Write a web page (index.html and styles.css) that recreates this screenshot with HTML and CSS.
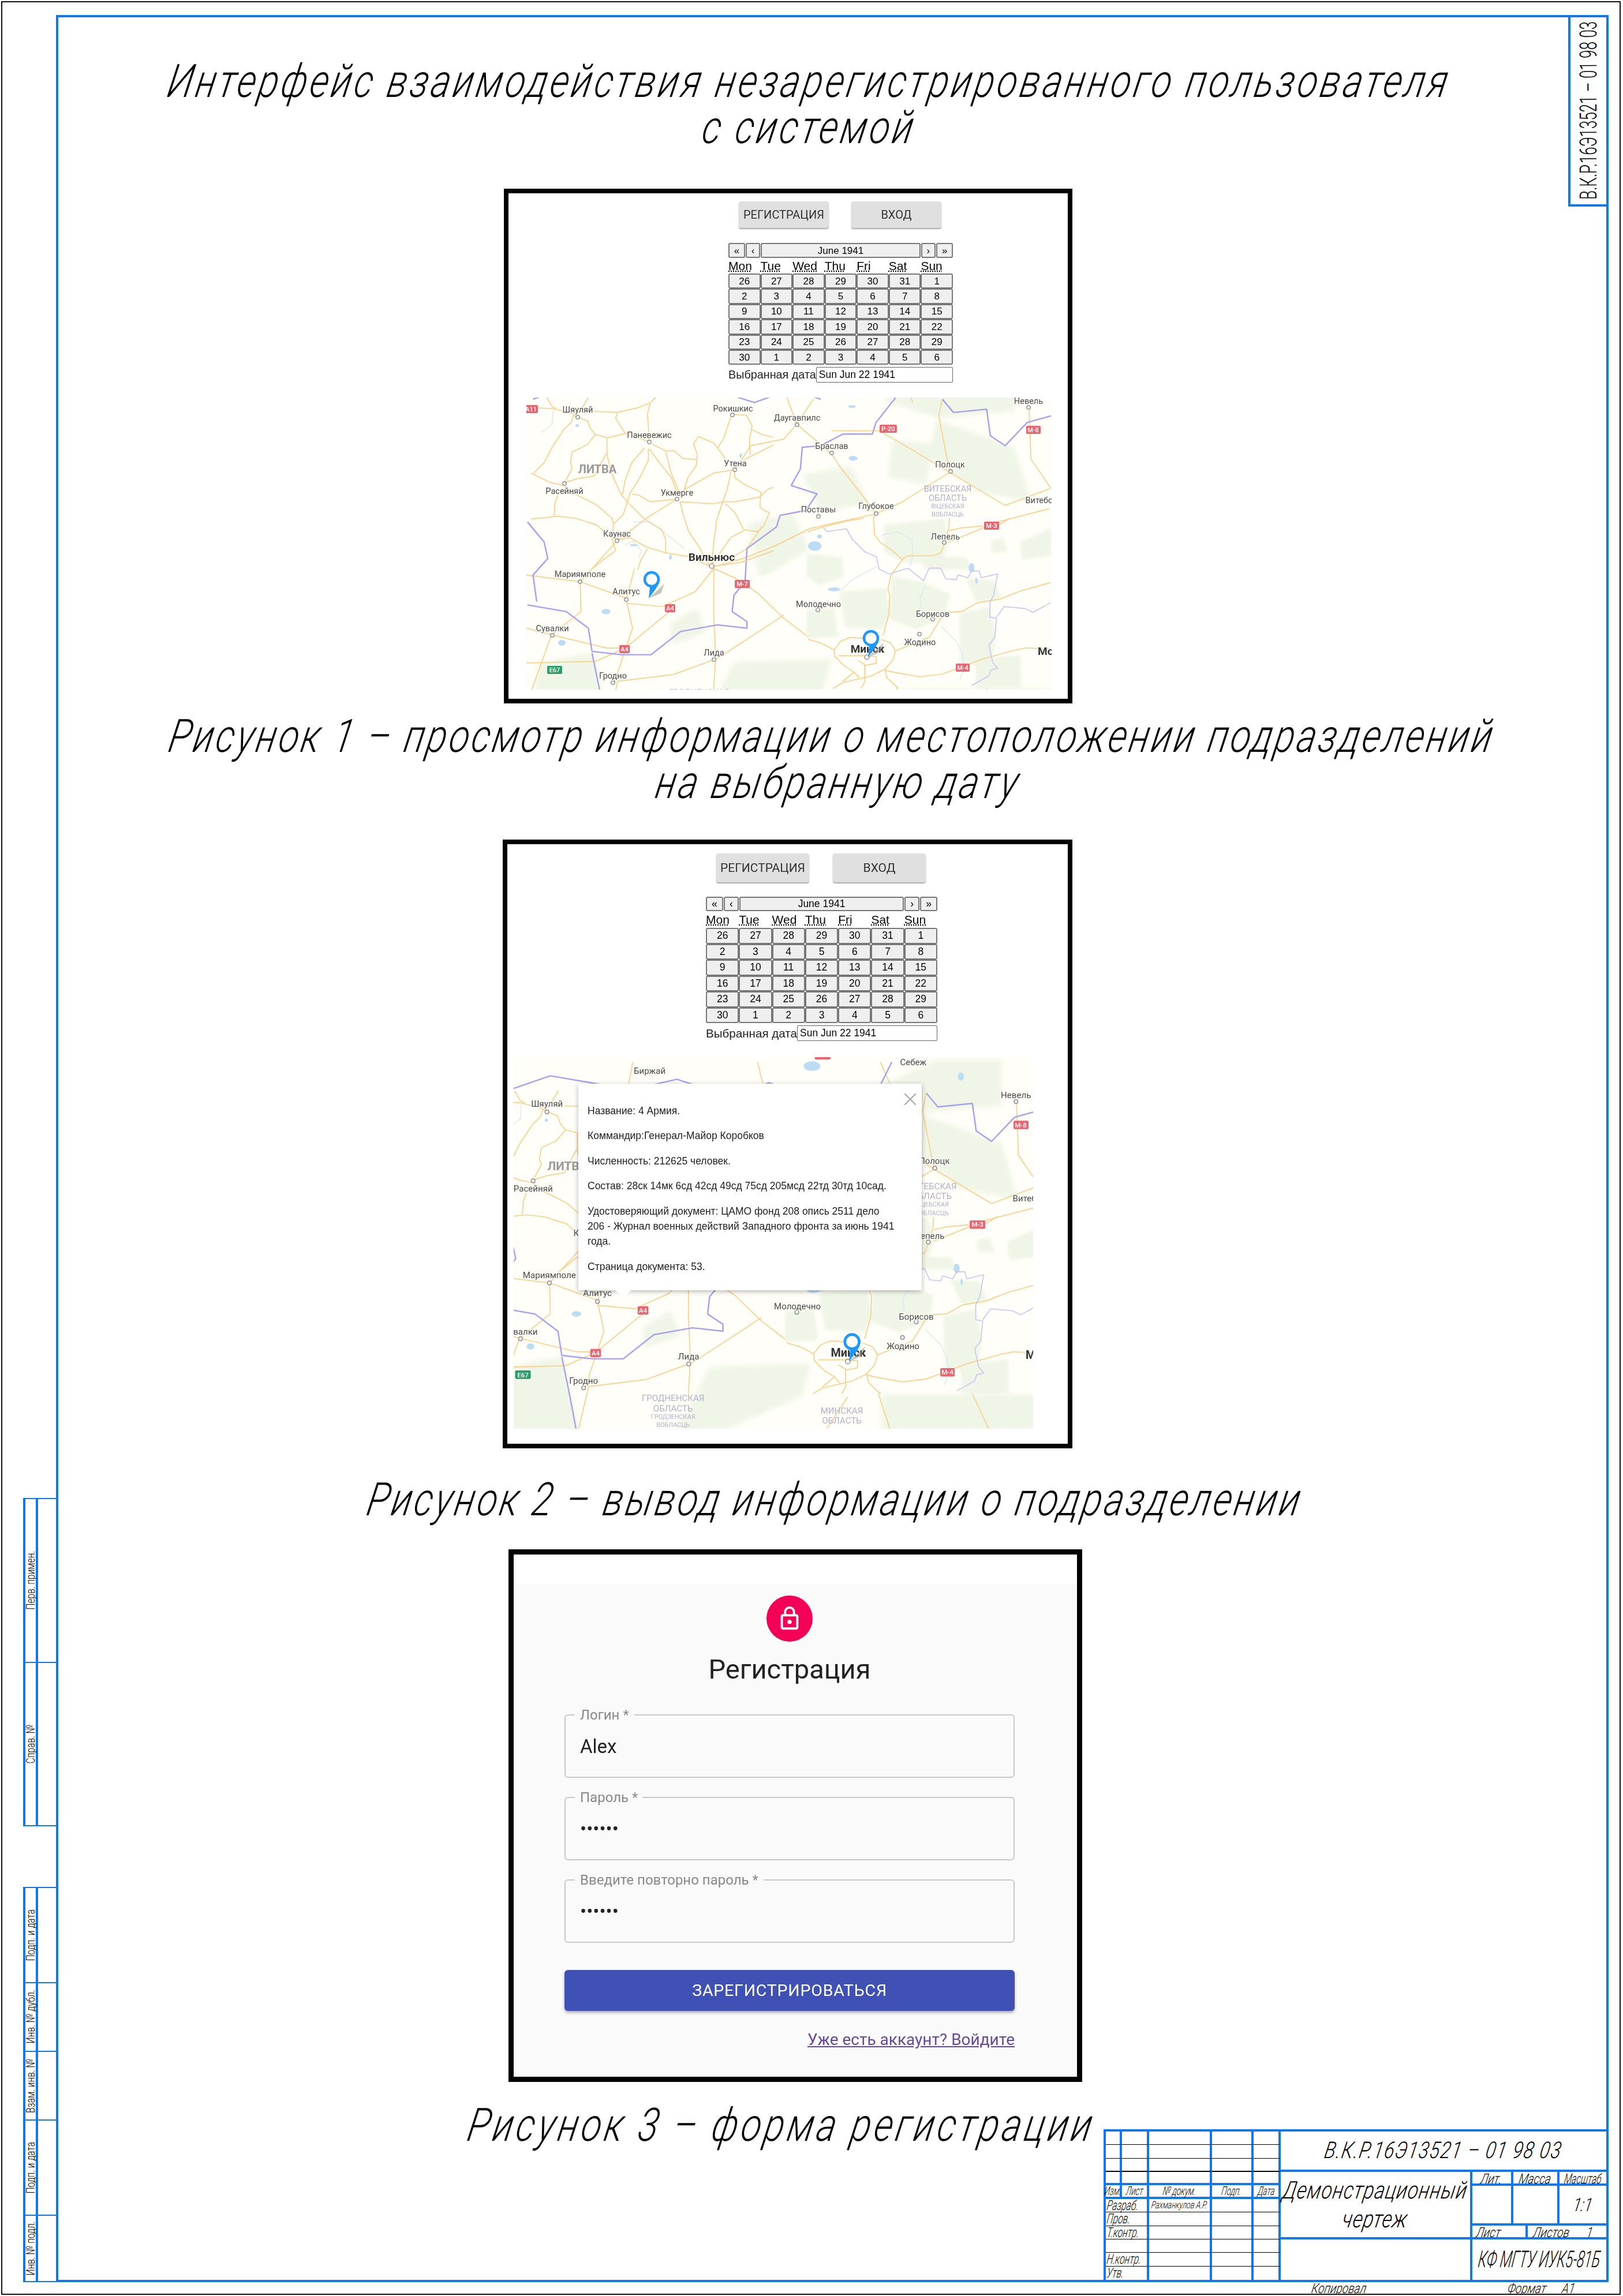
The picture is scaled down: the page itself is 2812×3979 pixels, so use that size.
FILE: index.html
```html
<!DOCTYPE html>
<html lang="ru">
<head>
    <meta charset="UTF-8">
    <title>Интерфейс взаимодействия незарегистрированного пользователя с системой</title>
    <link rel="stylesheet" href="styles.css">
</head>
<body>
<div class="sheet">
    <!-- Боковая графа -->
    <div class="side">
        <div class="side-group">
            <div class="side-row side-tall"><span class="side-label"><span class="gost-v">Перв. примен.</span></span><span class="side-empty"></span></div>
            <div class="side-row side-tall"><span class="side-label"><span class="gost-v">Справ. №</span></span><span class="side-empty"></span></div>
        </div>
        <div class="side-group">
            <div class="side-row side-h165"><span class="side-label"><span class="gost-v">Подп. и дата</span></span><span class="side-empty"></span></div>
            <div class="side-row side-h119"><span class="side-label"><span class="gost-v">Инв. № дубл.</span></span><span class="side-empty"></span></div>
            <div class="side-row side-h119"><span class="side-label"><span class="gost-v">Взам. инв. №</span></span><span class="side-empty"></span></div>
            <div class="side-row side-h165"><span class="side-label"><span class="gost-v">Подп. и дата</span></span><span class="side-empty"></span></div>
            <div class="side-row side-h115"><span class="side-label"><span class="gost-v">Инв. № подл.</span></span><span class="side-empty"></span></div>
        </div>
    </div>

    <div class="main">
        <div class="frame">
            <div class="stamp"><span class="gost-v stamp-text">В.К.Р.16Э13521 – 01 98 03</span></div>

            <div class="heading heading-title">
                <span class="gost big">Интерфейс взаимодействия незарегистрированного пользователя</span>
                <span class="gost big">с системой</span>
            </div>

            <!-- Рисунок 1 -->
            <div class="shot shot-one">
                <div class="screen">
                    <div class="auth-row">
                        <button class="auth-btn">РЕГИСТРАЦИЯ</button>
                        <button class="auth-btn">ВХОД</button>
                    </div>
                    <div class="calendar">
                        <div class="cal-nav">
                            <button class="cal-btn nav-a">«</button>
                            <button class="cal-btn nav-b">‹</button>
                            <button class="cal-btn nav-title">June 1941</button>
                            <button class="cal-btn nav-b">›</button>
                            <button class="cal-btn nav-a">»</button>
                        </div>
                        <div class="cal-week">
                            <abbr>Mon</abbr><abbr>Tue</abbr><abbr>Wed</abbr><abbr>Thu</abbr><abbr>Fri</abbr><abbr>Sat</abbr><abbr>Sun</abbr>
                        </div>
                        <div class="cal-days">
                            <button class="cal-btn">26</button><button class="cal-btn">27</button><button class="cal-btn">28</button><button class="cal-btn">29</button><button class="cal-btn">30</button><button class="cal-btn">31</button><button class="cal-btn">1</button>
                            <button class="cal-btn">2</button><button class="cal-btn">3</button><button class="cal-btn">4</button><button class="cal-btn">5</button><button class="cal-btn">6</button><button class="cal-btn">7</button><button class="cal-btn">8</button>
                            <button class="cal-btn">9</button><button class="cal-btn">10</button><button class="cal-btn">11</button><button class="cal-btn">12</button><button class="cal-btn">13</button><button class="cal-btn">14</button><button class="cal-btn">15</button>
                            <button class="cal-btn">16</button><button class="cal-btn">17</button><button class="cal-btn">18</button><button class="cal-btn">19</button><button class="cal-btn">20</button><button class="cal-btn">21</button><button class="cal-btn">22</button>
                            <button class="cal-btn">23</button><button class="cal-btn">24</button><button class="cal-btn">25</button><button class="cal-btn">26</button><button class="cal-btn">27</button><button class="cal-btn">28</button><button class="cal-btn">29</button>
                            <button class="cal-btn">30</button><button class="cal-btn">1</button><button class="cal-btn">2</button><button class="cal-btn">3</button><button class="cal-btn">4</button><button class="cal-btn">5</button><button class="cal-btn">6</button>
                        </div>
                        <div class="cal-date"><label>Выбранная дата</label><input type="text" value="Sun Jun 22 1941"></div>
                    </div>
                    <svg class="map" viewBox="0 0 910 506">
                        <defs>
                            <g id="map-pin">
                                <path class="pin-shadow" d="M-5,33 L22,8 L16,24Z"/>
                                <path class="pin-tail" d="M13,6 C10,14 0,26 -5,33 L-3,13Z"/>
                                <circle class="pin-head" r="12"/>
                            </g>
                        </defs>
                        <g id="map-world">
                            <rect x="-100" y="-100" width="1200" height="800" class="m-land"/>

                            <!-- общий план, координаты снимка -->
                            <g transform="scale(.639 .575) translate(-82 -645)">
                                <g class="m-forest">
                                    <path d="M840,880 L960,860 L1000,960 L880,980Z"/>
                                    <path d="M1200,720 L1400,800 L1440,950 L1300,920 L1180,820Z"/>
                                    <path d="M650,1450 L900,1440 L880,1523 L640,1640 L560,1640Z"/>
                                    <path d="M1100,1530 L1505,1530 L1505,1640 L1100,1640Z"/>
                                    <path d="M480,1330 L540,1290 L560,1350 L480,1380Z"/>
                                    <path d="M1060,650 L1240,560 L1400,560 L1400,680 L1200,700Z"/>
                                    <path d="M1080,780 L1180,790 L1160,900 L1070,880Z"/>
                                    <path d="M120,1450 L260,1420 L300,1640 L100,1640Z"/>
                                    <path d="M690,1030 L800,1000 L840,1100 L720,1180Z"/>
                                </g>
                                <g class="m-water">
                                    <ellipse cx="968" cy="828" rx="12" ry="7"/>
                                    <ellipse cx="965" cy="672" rx="10" ry="4"/>
                                    <ellipse cx="912" cy="572" rx="22" ry="14"/>
                                    <ellipse cx="1300" cy="602" rx="8" ry="12"/>
                                    <ellipse cx="178" cy="1384" rx="10" ry="9"/>
                                    <ellipse cx="298" cy="1290" rx="12" ry="8"/>
                                </g>
                                <g class="m-road">
                                    <path d="M590,1160 L650,1190 L710,1235 L780,1310 L850,1370"/>
                                    <path d="M590,1155 L590,1300 L595,1420 L590,1523"/>
                                    <path d="M590,1155 L670,1130 L760,1090 L850,1040 L1030,995 L1100,960 L1230,870 L1200,700 L1210,650"/>
                                    <path d="M1030,995 L1000,950 L930,850 L910,815 L815,725"/>
                                    <path d="M1030,995 L1022,1010"/>
                                    <path d="M720,1035 L680,1100 L620,1140"/>
                                    <path d="M430,650 L445,560"/>
                                    <path d="M647,865 L690,790 L780,770 L815,725 L790,650 L770,560"/>
                                    <path d="M595,1435 L740,1330 L780,1300"/>
                                    <path d="M590,1435 L480,1480 L330,1500 L300,1640"/>
                                    <path d="M320,1505 L370,1340 L353,1255 L375,1160"/>
                                    <path d="M353,1265 L450,1275 L540,1230 L590,1160"/>
                                    <path d="M228,1200 L327,1078"/>
                                    <path d="M228,1200 L353,1250"/>
                                    <path d="M82,1180 L228,1200 L230,1290 L150,1360 L82,1340"/>
                                    <path d="M150,1360 L300,1400 L350,1400 L470,1290"/>
                                    <path d="M82,1445 L270,1440 L350,1400"/>
                                    <path d="M150,1360 L60,1640"/>
                                    <path d="M815,725 L860,650"/>
                                    <path d="M910,745 L1040,745 L1230,870"/>
                                    <path d="M1230,870 L1380,970 L1500,920"/>
                                    <path d="M1500,980 L1360,1020 L1217,1085"/>
                                    <path d="M1445,680 L1450,830 L1505,920"/>
                                    <path d="M1005,1530 L940,1640"/>
                                    <path d="M1085,1520 L1120,1640"/>
                                    <path d="M1300,1450 L1380,1640"/>
                                    <path d="M1090,560 L1130,660"/>
                                </g>
                                <g class="m-border">
                                    <path d="M1120,560 L1080,650 L1030,720 L1020,755 L940,755 L880,790 L830,795 L825,860 L800,910 L870,935 L840,985 L770,1000 L760,1035 L680,1100 L675,1200 L645,1240 L640,1290 L680,1320 L680,1340 L600,1330 L500,1350 L420,1420 L340,1420 L260,1410 L250,1340 L190,1290 L85,1270"/>
                                    <path d="M85,1020 L130,1080 L140,1130 L100,1180 L110,1260"/>
                                    <path d="M260,1415 L280,1523 L300,1640"/>
                                    <path d="M1210,650 L1240,690 L1330,680 L1340,760 L1380,790 L1440,720 L1505,700"/>
                                    <path d="M100,650 L230,600 L440,640 L560,610 L700,660 L800,620 L880,650"/>
                                </g>
                            </g>

                            <!-- запад: Литва -->
                            <g transform="translate(8 -1) scale(.3333)">
                                <g class="m-water">
                                    <ellipse cx="240" cy="148" rx="8" ry="8"/>
                                    <ellipse cx="1090" cy="305" rx="7" ry="10"/>
                                    <ellipse cx="725" cy="832" rx="7" ry="14"/>
                                    <ellipse cx="535" cy="770" rx="22" ry="6"/>
                                </g>
                                <g class="m-river">
                                    <path d="M490,770 L530,750 L575,800 L560,830"/>
                                    <path d="M530,650 L620,650 L700,710 L800,790"/>
                                    <path d="M115,70 L110,140 L55,185"/>
                                </g>
                                <g class="m-road">
                                    <path d="M0,55 L110,60 L170,75 L220,90 L245,105"/>
                                    <path d="M80,0 L110,50 L130,60"/>
                                    <path d="M300,0 L270,50 L250,80 L220,100 L210,130 L170,170 L110,260 L70,340 L15,395"/>
                                    <path d="M245,105 L295,125 L310,165 L335,195 L400,212 L490,190 L610,230"/>
                                    <path d="M330,75 L450,80 L560,55 L620,30 L650,0"/>
                                    <path d="M450,85 L440,110 L490,190"/>
                                    <path d="M620,30 L605,90 L610,150 L615,230"/>
                                    <path d="M0,395 L100,445 L175,460 L230,505 L340,560 L420,630 L430,660"/>
                                    <path d="M335,195 L290,250 L215,285 L205,340 L215,370 L180,435"/>
                                    <path d="M175,445 L240,425 L330,410 L390,295"/>
                                    <path d="M395,215 L395,300 L420,400 L470,510 L510,555 L590,635 L680,690 L700,740 L700,810"/>
                                    <path d="M590,265 L525,340 L490,430 L475,510"/>
                                    <path d="M610,270 L610,330 L565,420 L515,500 L480,610 L430,660"/>
                                    <path d="M615,270 L690,370 L730,420 L760,500"/>
                                    <path d="M630,245 L700,280 L745,280 L790,320 L860,325"/>
                                    <path d="M700,285 L730,400 L770,490"/>
                                    <path d="M870,205 L845,245 L865,300 L860,355 L815,420 L795,490"/>
                                    <path d="M870,205 L950,240 L970,265 L1000,220 L1040,100 L1048,90"/>
                                    <path d="M1048,92 L1120,95 L1150,150 L1135,220 L1140,300"/>
                                    <path d="M1150,170 L1200,195 L1260,210"/>
                                    <path d="M970,265 L1010,320"/>
                                    <path d="M1110,325 L1260,250"/>
                                    <path d="M1058,378 L950,395 L880,435 L800,480 L775,525"/>
                                    <path d="M760,530 L600,630 L510,700 L445,745"/>
                                    <path d="M760,530 L620,545 L560,510 L525,505"/>
                                    <path d="M775,545 L950,555 L1000,545 L1060,545 L1190,520 L1230,480 L1260,470"/>
                                    <path d="M1058,385 L1060,420 L1110,455 L1195,495 L1190,570 L1210,590 L1240,600"/>
                                    <path d="M1040,385 L1020,480 L995,550 L965,640 L950,760 L940,870"/>
                                    <path d="M775,545 L790,610 L820,700 L880,790 L930,880"/>
                                    <path d="M1010,555 L1060,600 L1105,690 L1180,700 L1210,670 L1240,600"/>
                                    <path d="M1105,695 L1040,730 L990,800 L940,870"/>
                                    <path d="M445,745 L510,730 L600,780 L700,810 L820,830 L930,880"/>
                                    <path d="M430,660 L420,730 L440,800 L370,850 L310,900"/>
                                    <path d="M0,635 L140,620 L230,630 L340,665 L415,730"/>
                                    <path d="M605,790 L570,850 L555,900"/>
                                    <path d="M120,620 L125,550 L140,510"/>
                                    <path d="M950,880 L1090,860 L1260,800"/>
                                </g>
                            </g>

                            <!-- восток: Минск, Борисов -->
                            <g transform="translate(488 209) scale(.3333)">
                                <g class="m-forest">
                                    <path d="M400,40 L700,10 L730,120 L700,200 L520,230 L400,170Z"/>
                                    <path d="M440,310 L600,340 L730,400 L700,520 L560,570 L430,520Z"/>
                                    <path d="M170,390 L400,370 L420,500 L380,570 L200,560Z"/>
                                    <path d="M790,500 L940,470 L970,620 L950,740 L800,760Z"/>
                                    <path d="M0,190 L170,210 L180,300 L60,340 L0,300Z"/>
                                    <path d="M960,120 L1010,110 L1030,170 L960,170Z"/>
                                    <path d="M1110,130 L1260,60 L1260,190 L1120,210Z"/>
                                    <path d="M830,320 L960,330 L1000,420 L880,430Z"/>
                                    <path d="M570,200 L820,210 L840,260 L620,260Z"/>
                                    <path d="M0,480 L130,470 L150,610 L0,620Z"/>
                                    <path d="M880,740 L1100,720 L1100,880 L880,880Z"/>
                                </g>
                                <g class="m-water">
                                    <ellipse cx="35" cy="145" rx="35" ry="25"/>
                                    <ellipse cx="60" cy="95" rx="12" ry="10"/>
                                    <ellipse cx="850" cy="258" rx="15" ry="24"/>
                                    <ellipse cx="875" cy="325" rx="6" ry="16"/>
                                    <ellipse cx="135" cy="370" rx="32" ry="10"/>
                                </g>
                                <g class="m-river">
                                    <path d="M380,90 L460,70 L540,110 L545,190 L530,250"/>
                                    <path d="M360,250 L230,320 L170,375"/>
                                    <path d="M610,350 L580,420 L590,470"/>
                                    <path d="M690,560 L770,640 L800,700 L810,770 L790,840"/>
                                </g>
                                <g class="m-road">
                                    <path d="M340,0 L345,85 L375,125 L440,170 L490,215 L430,300 L415,370 L425,400 L420,500 L390,610"/>
                                    <path d="M490,215 L520,195 L650,195 L690,180 L710,130 L730,60 L735,0"/>
                                    <path d="M0,70 L80,45 L200,15 L290,0"/>
                                    <path d="M735,65 L800,50 L910,40"/>
                                    <path d="M985,40 L1050,0"/>
                                    <path d="M455,690 L630,620 L690,520 L720,490 L800,485 L880,440 L1000,420 L1100,380 L1260,335"/>
                                    <path d="M400,790 L440,800 L580,825 L700,810 L780,780 L900,735 L1060,690 L1130,675 L1260,680"/>
                                    <path d="M0,630 L70,650 L135,685 L140,720 L190,770 L240,800 L265,830"/>
                                    <path d="M135,685 L170,640 L220,620 L300,625"/>
                                    <path d="M380,630 L430,650 L455,690 L440,740 L400,785 L330,820 L180,855 L130,885"/>
                                    <path d="M400,785 L410,830 L470,885"/>
                                    <path d="M295,760 L295,850 L275,885"/>
                                    <path d="M240,800 L180,850"/>
                                    <path d="M160,715 L300,715 L355,720 L355,755 L300,765 L260,740"/>
                                </g>
                                <g class="m-inner">
                                    <path d="M80,50 L100,70 L200,55 L230,110 L295,175 L355,200 L370,265 L420,290 L520,260 L600,325 L630,260 L690,260 L715,315 L770,320 L780,295 L830,310 L850,275 L890,275 L900,310 L985,290 L965,400 L945,440 L945,515 L980,520 L970,620 L940,660 L960,750 L985,780 L950,790 L940,820 L850,870"/>
                                    <path d="M980,515 L1020,460 L1130,470 L1170,490 L1260,440"/>
                                </g>
                            </g>

                            <g class="m-dot">
                                <circle cx="89" cy="34" r="3.2"/><circle cx="213" cy="77" r="3.2"/><circle cx="357" cy="30" r="3.2"/>
                                <circle cx="469" cy="47" r="3.2"/><circle cx="529" cy="96" r="3.2"/><circle cx="870" cy="17" r="3.2"/>
                                <circle cx="361" cy="125" r="3.2"/><circle cx="735" cy="128" r="3.2"/><circle cx="66" cy="149" r="3.2"/>
                                <circle cx="261" cy="176" r="3.2"/><circle cx="506" cy="206" r="3.2"/><circle cx="606" cy="201" r="3.2"/>
                                <circle cx="157" cy="248" r="3.2"/><circle cx="724" cy="251" r="3.2"/><circle cx="321" cy="292" r="4"/>
                                <circle cx="93" cy="319" r="3.2"/><circle cx="173" cy="350" r="3.2"/><circle cx="505" cy="368" r="3.2"/>
                                <circle cx="704" cy="384" r="3.2"/><circle cx="45" cy="412" r="3.2"/><circle cx="681" cy="410" r="3.2"/>
                                <circle cx="590" cy="450" r="4"/><circle cx="325" cy="454" r="3.2"/><circle cx="150" cy="494" r="3.2"/>
                            </g>
                            <g class="m-text">
                                <text x="89" y="26">Шяуляй</text>
                                <text x="213" y="70">Паневежис</text>
                                <text x="358" y="24">Рокишкис</text>
                                <text x="469" y="40">Даугавпилс</text>
                                <text x="529" y="89">Браслав</text>
                                <text x="870" y="11">Невель</text>
                                <text x="362" y="119">Утена</text>
                                <text x="734" y="121">Полоцк</text>
                                <text x="66" y="167">Расейняй</text>
                                <text x="261" y="170">Укмерге</text>
                                <text x="892" y="183">Витебск</text>
                                <text x="506" y="199">Поставы</text>
                                <text x="606" y="193">Глубокое</text>
                                <text x="157" y="241">Каунас</text>
                                <text x="726" y="246">Лепель</text>
                                <text x="93" y="311">Мариямполе</text>
                                <text x="173" y="341">Алитус</text>
                                <text x="506" y="363">Молодечно</text>
                                <text x="704" y="380">Борисов</text>
                                <text x="45" y="405">Сувалки</text>
                                <text x="682" y="429">Жодино</text>
                                <text x="325" y="447">Лида</text>
                                <text x="150" y="487">Гродно</text>
                                <text x="260" y="-29">Биржай</text>
                                <text x="699" y="-44">Себеж</text>
                            </g>
                            <text class="m-city" x="321" y="283">Вильнюс</text>
                            <text class="m-city" x="591" y="442">Минск</text>
                            <text class="m-city" x="925" y="446">Могилёв</text>
                            <text class="m-country" x="123" y="131">ЛИТВА</text>
                            <g class="m-region">
                                <text x="730" y="163">ВИТЕБСКАЯ</text>
                                <text x="730" y="179">ОБЛАСТЬ</text>
                                <text class="m-region-sm" x="730" y="192">ВІЦЕБСКАЯ</text>
                                <text class="m-region-sm" x="730" y="206">ВОБЛАСЦЬ</text>
                                <text x="299" y="516">ГРОДНЕНСКАЯ</text>
                                <text x="299" y="533">ОБЛАСТЬ</text>
                                <text class="m-region-sm" x="299" y="546">ГРОДЗЕНСКАЯ</text>
                                <text class="m-region-sm" x="299" y="559">ВОБЛАСЦЬ</text>
                                <text x="580" y="537">МИНСКАЯ</text>
                                <text x="580" y="553">ОБЛАСТЬ</text>
                            </g>
                            <g class="m-shield">
                                <rect x="-4" y="13" width="24" height="14" rx="2"/><text x="8" y="24">А11</text>
                                <rect x="612" y="47" width="30" height="14" rx="2"/><text x="627" y="58">Р-20</text>
                                <rect x="866" y="49" width="25" height="14" rx="2"/><text x="878" y="60">М-8</text>
                                <rect x="793" y="215" width="26" height="14" rx="2"/><text x="806" y="226">М-3</text>
                                <rect x="361" y="316" width="26" height="14" rx="2"/><text x="374" y="327">М-7</text>
                                <rect x="240" y="358" width="18" height="14" rx="2"/><text x="249" y="369">А4</text>
                                <rect x="161" y="429" width="18" height="14" rx="2"/><text x="170" y="440">А4</text>
                                <rect x="744" y="461" width="24" height="14" rx="2"/><text x="756" y="472">М-4</text>
                                <rect x="535" y="-62" width="26" height="9" rx="2"/>
                            </g>
                            <g class="m-shield m-shield-green">
                                <rect x="36" y="465" width="26" height="14" rx="2"/><text x="49" y="476">Е67</text>
                            </g>
                            <use href="#map-pin" x="597" y="417"/>
                        </g>
                        <use href="#map-pin" x="217" y="315"/>
                    </svg>
                </div>
            </div>

            <div class="heading heading-cap-one">
                <span class="gost big">Рисунок 1 – просмотр информации о местоположении подразделений</span>
                <span class="gost big cap-line-two">на выбранную дату</span>
            </div>

            <!-- Рисунок 2 -->
            <div class="shot shot-two">
                <div class="screen">
                    <div class="auth-row">
                        <button class="auth-btn">РЕГИСТРАЦИЯ</button>
                        <button class="auth-btn">ВХОД</button>
                    </div>
                    <div class="calendar">
                        <div class="cal-nav">
                            <button class="cal-btn nav-a">«</button>
                            <button class="cal-btn nav-b">‹</button>
                            <button class="cal-btn nav-title">June 1941</button>
                            <button class="cal-btn nav-b">›</button>
                            <button class="cal-btn nav-a">»</button>
                        </div>
                        <div class="cal-week">
                            <abbr>Mon</abbr><abbr>Tue</abbr><abbr>Wed</abbr><abbr>Thu</abbr><abbr>Fri</abbr><abbr>Sat</abbr><abbr>Sun</abbr>
                        </div>
                        <div class="cal-days">
                            <button class="cal-btn">26</button><button class="cal-btn">27</button><button class="cal-btn">28</button><button class="cal-btn">29</button><button class="cal-btn">30</button><button class="cal-btn">31</button><button class="cal-btn">1</button>
                            <button class="cal-btn">2</button><button class="cal-btn">3</button><button class="cal-btn">4</button><button class="cal-btn">5</button><button class="cal-btn">6</button><button class="cal-btn">7</button><button class="cal-btn">8</button>
                            <button class="cal-btn">9</button><button class="cal-btn">10</button><button class="cal-btn">11</button><button class="cal-btn">12</button><button class="cal-btn">13</button><button class="cal-btn">14</button><button class="cal-btn">15</button>
                            <button class="cal-btn">16</button><button class="cal-btn">17</button><button class="cal-btn">18</button><button class="cal-btn">19</button><button class="cal-btn">20</button><button class="cal-btn">21</button><button class="cal-btn">22</button>
                            <button class="cal-btn">23</button><button class="cal-btn">24</button><button class="cal-btn">25</button><button class="cal-btn">26</button><button class="cal-btn">27</button><button class="cal-btn">28</button><button class="cal-btn">29</button>
                            <button class="cal-btn">30</button><button class="cal-btn">1</button><button class="cal-btn">2</button><button class="cal-btn">3</button><button class="cal-btn">4</button><button class="cal-btn">5</button><button class="cal-btn">6</button>
                        </div>
                        <div class="cal-date"><label>Выбранная дата</label><input type="text" value="Sun Jun 22 1941"></div>
                    </div>
                    <div class="map-wrap">
                        <svg class="map" viewBox="33.6 -57 865 619"><use href="#map-world"/></svg>
                        <div class="balloon">
                            <span class="balloon-close"></span>
                            <p>Название: 4 Армия.</p>
                            <p>Коммандир:Генерал-Майор Коробков</p>
                            <p>Численность: 212625 человек.</p>
                            <p>Состав: 28ск 14мк 6сд 42сд 49сд 75сд 205мсд 22тд 30тд 10сад.</p>
                            <p>Удостоверяющий документ: ЦАМО фонд 208 опись 2511 дело 206 - Журнал военных действий Западного фронта за июнь 1941 года.</p>
                            <p>Страница документа: 53.</p>
                        </div>
                    </div>
                </div>
            </div>

            <div class="heading heading-cap-two">
                <span class="gost big">Рисунок 2 – вывод информации о подразделении</span>
            </div>

            <!-- Рисунок 3 -->
            <div class="shot shot-three">
                <div class="screen signup">
                    <div class="avatar">
                        <svg viewBox="0 0 24 24"><path d="M18 8h-1V6c0-2.76-2.24-5-5-5S7 3.24 7 6v2H6c-1.1 0-2 .9-2 2v10c0 1.1.9 2 2 2h12c1.1 0 2-.9 2-2V10c0-1.1-.9-2-2-2zM9 6c0-1.66 1.34-3 3-3s3 1.34 3 3v2H9V6zm9 14H6V10h12v10zm-6-3c1.1 0 2-.9 2-2s-.9-2-2-2-2 .9-2 2 .9 2 2 2z"/></svg>
                    </div>
                    <h1>Регистрация</h1>
                    <fieldset class="field"><legend>Логин *</legend><input type="text" value="Alex"></fieldset>
                    <fieldset class="field"><legend>Пароль *</legend><input type="password" value="123456"></fieldset>
                    <fieldset class="field"><legend>Введите повторно пароль *</legend><input type="password" value="123456"></fieldset>
                    <button class="submit">ЗАРЕГИСТРИРОВАТЬСЯ</button>
                    <div class="signin"><a href="#">Уже есть аккаунт? Войдите</a></div>
                </div>
            </div>

            <div class="heading heading-cap-three">
                <span class="gost big">Рисунок 3 – форма регистрации</span>
            </div>

            <!-- Основная надпись -->
            <div class="title-block">
                <div class="tb-left">
                    <div class="c"></div><div class="c"></div><div class="c"></div><div class="c"></div><div class="c"></div>
                    <div class="c"></div><div class="c"></div><div class="c"></div><div class="c"></div><div class="c"></div>
                    <div class="c c-mid"></div><div class="c c-mid"></div><div class="c c-mid"></div><div class="c c-mid"></div><div class="c c-mid"></div>
                    <div class="c c-thick"></div><div class="c c-thick"></div><div class="c c-thick"></div><div class="c c-thick"></div><div class="c c-thick"></div>
                    <div class="c c-thick"><span class="gost small">Изм.</span></div><div class="c c-thick"><span class="gost small">Лист</span></div><div class="c c-thick"><span class="gost small">№ докум.</span></div><div class="c c-thick"><span class="gost small">Подп.</span></div><div class="c c-thick"><span class="gost small">Дата</span></div>
                    <div class="c c-wide c-name"><span class="gost role">Разраб.</span></div><div class="c"><span class="gost tiny">Рахманкулов А.Р.</span></div><div class="c"></div><div class="c"></div>
                    <div class="c c-wide c-name"><span class="gost role">Пров.</span></div><div class="c"></div><div class="c"></div><div class="c"></div>
                    <div class="c c-wide c-name"><span class="gost role">Т.контр.</span></div><div class="c"></div><div class="c"></div><div class="c"></div>
                    <div class="c c-wide c-name"></div><div class="c"></div><div class="c"></div><div class="c"></div>
                    <div class="c c-wide c-name"><span class="gost role">Н.контр.</span></div><div class="c"></div><div class="c"></div><div class="c"></div>
                    <div class="c c-wide c-name c-last"><span class="gost role">Утв.</span></div><div class="c c-last"></div><div class="c c-last"></div><div class="c c-last"></div>
                </div>
                <div class="tb-right">
                    <div class="tb-number"><span class="gost number">В.К.Р.16Э13521 – 01 98 03</span></div>
                    <div class="tb-mid">
                        <div class="tb-name">
                            <span class="gost name">Демонстрационный</span>
                            <span class="gost name">чертеж</span>
                        </div>
                        <div class="tb-info">
                            <div class="info-head">
                                <div class="info-lit"><span class="gost label">Лит.</span></div>
                                <div class="info-mass"><span class="gost label">Масса</span></div>
                                <div class="info-scale"><span class="gost label label-narrow">Масштаб</span></div>
                            </div>
                            <div class="info-body">
                                <div class="info-lit lit-cells"><i></i><i></i><i></i></div>
                                <div class="info-mass"></div>
                                <div class="info-scale"><span class="gost scale">1:1</span></div>
                            </div>
                            <div class="info-foot">
                                <div class="foot-sheet"><span class="gost label">Лист</span></div>
                                <div class="foot-sheets"><span class="gost label">Листов</span><span class="gost label">1</span></div>
                            </div>
                        </div>
                    </div>
                    <div class="tb-bottom">
                        <div class="tb-blank"></div>
                        <div class="tb-org"><span class="gost org">КФ МГТУ ИУК5-81Б</span></div>
                    </div>
                </div>
            </div>
        </div>
        <div class="frame-foot">
            <span class="gost label foot-copy">Копировал</span>
            <span class="gost label foot-format">Формат</span>
            <span class="gost label foot-size">А1</span>
        </div>
    </div>
</div>
</body>
</html>
```
FILE: styles.css
```css
:root {
    --blue: #1177ee;
}

* {
    box-sizing: border-box;
}

body {
    margin: 0;
    background-color: #fff;
    color: #000;
}

.sheet {
    width: 2806px;
    height: 3975px;
    margin: 2px;
    border: 2px solid #111;
    padding: 22px 0 0 36px;
    display: flex;
    overflow: hidden;
}

/* GOST-like drawing text */
.gost {
    display: inline-block;
    font-family: "Roboto", sans-serif;
    font-style: italic;
    font-weight: 300;
    line-height: 1;
    white-space: nowrap;
    letter-spacing: 0;
    transform: scaleX(.8) skewX(-13deg);
}

.gost-v {
    display: inline-block;
    font-family: "Roboto", sans-serif;
    font-style: italic;
    font-weight: 300;
    white-space: nowrap;
    writing-mode: vertical-rl;
    text-orientation: sideways;
    font-size: 21px;
    line-height: 1;
    transform: rotate(180deg) scaleY(.76) skewY(-10deg);
}

.big {
    font-size: 80px;
    line-height: 80px;
    letter-spacing: 6.8px;
}

.small {
    font-size: 21px;
    transform: scaleX(.64) skewX(-13deg);
}

.role {
    font-size: 24px;
    transform: scaleX(.66) skewX(-13deg);
}

.tiny {
    font-size: 17.5px;
    transform: scaleX(.72) skewX(-13deg);
}

.label {
    font-size: 24px;
}

.label-narrow {
    transform: scaleX(.65) skewX(-13deg);
}

.number {
    font-size: 40px;
    letter-spacing: .05em;
}

.org {
    font-size: 40px;
    transform: scaleX(.6) skewX(-13deg);
}

.name {
    font-size: 42px;
    line-height: 50px;
    letter-spacing: .03em;
}

.scale {
    font-size: 32px;
}

/* Side strips */
.side {
    width: 57px;
    flex: none;
    padding-top: 2570px;
}

.side-group {
    margin-bottom: 105px;
    border-bottom: 2px solid var(--blue);
}

.side-row {
    display: flex;
    border-top: 2px solid var(--blue);
}

.side-tall {
    height: 283.5px;
}

.side-h165 {
    height: 165px;
}

.side-h119 {
    height: 119px;
}

.side-h115 {
    height: 115px;
}

.side-label {
    width: 26px;
    border-left: 4px solid var(--blue);
    border-right: 4px solid var(--blue);
    display: flex;
    align-items: center;
    justify-content: center;
}

.side-empty {
    flex: 1;
}

/* Main frame */
.main {
    width: 2690px;
    flex: none;
}

.frame {
    position: relative;
    width: 2690px;
    height: 3929px;
    border: 4px solid var(--blue);
}

.stamp {
    position: absolute;
    top: 0;
    right: 0;
    width: 66px;
    height: 328px;
    border-left: 4px solid var(--blue);
    border-bottom: 4px solid var(--blue);
    display: flex;
    align-items: center;
    justify-content: center;
}

.stamp-text {
    font-size: 41px;
    transform: rotate(180deg) scaleY(.65) skewY(-10deg);
}

.heading {
    display: flex;
    flex-direction: column;
    align-items: center;
}

.heading-title {
    padding-top: 71px;
    padding-right: 78px;
}

.heading-title .big {
    letter-spacing: 6.1px;
}

.heading-cap-one {
    margin-top: 17px;
}

.heading-cap-one .big {
    letter-spacing: 5.2px;
}

.cap-line-two {
    margin-left: 22px;
}

.heading-cap-two {
    margin-top: 49px;
    padding-left: 10px;
}

.heading-cap-two .big {
    letter-spacing: 5.3px;
}

.heading-cap-three {
    margin-top: 35px;
    padding-right: 174px;
}

/* Screenshots */
.shot {
    border: 8px solid #000;
    background-color: #fff;
}

.shot-one {
    width: 985px;
    height: 892px;
    margin: 66px 0 0 772px;
    --btn-left: 399px;
    --btn-w: 156px;
    --btn-h: 46px;
    --btn-gap: 39px;
    --btn-top: 14px;
    --btn-font: 20px;
    --cal-left: 381px;
    --cal-w: 389px;
    --cal-top: 26px;
    --nav-h: 26px;
    --week-h: 27px;
    --day-h: 26.4px;
    --cal-font: 17px;
    --date-font: 19.8px;
    --map-left: 31px;
    --map-w: 910px;
    --map-h: 506px;
    --map-top: 26px;
}

.shot-two {
    width: 987px;
    height: 1055px;
    margin: 59px 0 0 770px;
    --btn-left: 362px;
    --btn-w: 161px;
    --btn-h: 50px;
    --btn-gap: 41px;
    --btn-top: 16px;
    --btn-font: 21px;
    --cal-left: 344px;
    --cal-w: 401px;
    --cal-top: 25px;
    --nav-h: 25px;
    --week-h: 29px;
    --day-h: 27.5px;
    --cal-font: 17.5px;
    --date-font: 20.6px;
    --map-left: 11px;
    --map-w: 900px;
    --map-h: 644px;
    --map-top: 28px;
}

.shot-three {
    width: 994px;
    height: 923px;
    margin: 46px 0 0 780px;
    border-width: 9px;
}

.screen {
    filter: blur(.5px);
    font-family: "Liberation Sans", sans-serif;
}

.auth-row {
    display: flex;
    gap: var(--btn-gap);
    padding: var(--btn-top) 0 0 var(--btn-left);
}

.auth-btn {
    width: var(--btn-w);
    height: var(--btn-h);
    border: none;
    border-radius: 4px;
    background-color: #e0e0e0;
    color: #333;
    font-family: "Roboto", sans-serif;
    font-size: var(--btn-font);
    padding: 0;
    box-shadow: 0 2px 2px rgba(0, 0, 0, .35);
}

.calendar {
    width: var(--cal-w);
    margin: var(--cal-top) 0 0 var(--cal-left);
    font-size: var(--cal-font);
}

.cal-nav {
    display: flex;
    height: var(--nav-h);
    gap: 1px;
}

.cal-btn {
    padding: 0;
    border: 2px solid #777;
    border-radius: 3px;
    background-color: #efefef;
    color: #000;
    font-family: "Liberation Sans", sans-serif;
    font-size: var(--cal-font);
    line-height: 1;
}

.nav-a {
    width: 7.4%;
}

.nav-b {
    width: 6.6%;
}

.nav-title {
    flex: 1;
}

.cal-week {
    display: grid;
    grid-template-columns: repeat(7, 1fr);
    height: var(--week-h);
    align-items: center;
    font-size: 21px;
}

.cal-week abbr {
    width: max-content;
    text-decoration: underline dotted;
    line-height: 22px;
}

.cal-days {
    display: grid;
    grid-template-columns: repeat(7, 1fr);
    grid-auto-rows: var(--day-h);
}

.cal-date {
    display: flex;
    align-items: center;
    margin-top: 4px;
    font-size: var(--date-font);
    color: #222;
}

.cal-date label {
    white-space: nowrap;
}

.cal-date input {
    flex: 1;
    min-width: 0;
    height: 27px;
    border: 1px solid #666;
    border-radius: 2px;
    padding: 0 4px;
    font-family: "Liberation Sans", sans-serif;
    font-size: 17.5px;
    color: #000;
    background-color: #fff;
}

.map {
    display: block;
    width: var(--map-w);
    height: var(--map-h);
    margin: var(--map-top) 0 0 var(--map-left);
}

.map-wrap {
    position: relative;
}

/* Map */
.m-land {
    fill: #fffef8;
}

.m-forest {
    filter: blur(6px);
}

.m-forest path {
    fill: #f0f6e7;
    stroke: #f0f6e7;
    stroke-width: 14;
    stroke-linejoin: round;
}

.m-water ellipse {
    fill: #bcdcf4;
}

.m-river path {
    fill: none;
    stroke: #d2e5f4;
    stroke-width: 1.2;
    vector-effect: non-scaling-stroke;
}

.m-road path {
    fill: none;
    stroke: #f9cf88;
    stroke-width: 1.7;
    stroke-linejoin: round;
    vector-effect: non-scaling-stroke;
}

.m-border path {
    fill: none;
    stroke: #a89ff0;
    stroke-width: 2.4;
    stroke-linejoin: round;
    vector-effect: non-scaling-stroke;
}

.m-inner path {
    fill: none;
    stroke: #c8c4f2;
    stroke-width: 1.6;
    stroke-linejoin: round;
    vector-effect: non-scaling-stroke;
}

.m-dot circle {
    fill: #fff;
    stroke: #777;
    stroke-width: 1.2;
}

.m-text text,
.m-city,
.m-country,
.m-region text,
.m-shield text {
    font-family: "Roboto", sans-serif;
    text-anchor: middle;
}

.m-text text {
    font-size: 14.5px;
    fill: #4a4a4a;
    stroke: #fffef8;
    stroke-width: 2.5px;
    paint-order: stroke;
}

.m-city {
    font-size: 19px;
    font-weight: 700;
    fill: #333;
    stroke: #fffef8;
    stroke-width: 2.5px;
    paint-order: stroke;
}

.m-country {
    font-size: 20px;
    font-weight: 700;
    fill: #999;
}

.m-region text {
    font-size: 14.5px;
    fill: #b4b2c8;
}

.m-region .m-region-sm {
    font-size: 10.5px;
}

.m-shield rect {
    fill: #e96570;
}

.m-shield text {
    font-size: 11px;
    font-weight: 500;
    fill: #fff;
}

.m-shield-green rect {
    fill: #2a9d68;
}

.pin-head {
    fill: none;
    stroke: #1e98ff;
    stroke-width: 4.5;
}

.pin-tail {
    fill: #1e98ff;
}

.pin-shadow {
    fill: #888;
    opacity: .5;
}

/* Balloon */
.balloon {
    position: absolute;
    left: 123px;
    top: 46px;
    width: 595px;
    height: 358px;
    background-color: #fff;
    padding: 34px 16px 0;
    font-family: "Liberation Sans", sans-serif;
    font-size: 17.5px;
    line-height: 26.4px;
    color: #222;
    box-shadow: 0 2px 8px rgba(0, 0, 0, .3);
}

.balloon p {
    margin: 0 0 17px;
    max-width: 537px;
}

.balloon::after {
    content: "";
    position: absolute;
    left: 64px;
    bottom: -14px;
    border-left: 14px solid transparent;
    border-right: 14px solid transparent;
    border-top: 14px solid #fff;
}

.balloon-close {
    position: absolute;
    top: 17px;
    right: 10px;
    width: 20px;
    height: 20px;
    background:
        linear-gradient(45deg, transparent 46%, #aaa 46%, #aaa 54%, transparent 54%),
        linear-gradient(-45deg, transparent 46%, #aaa 46%, #aaa 54%, transparent 54%);
}

/* Registration */
.signup {
    filter: blur(.4px);
    height: 854px;
    margin-top: 51px;
    padding: 20px 108px 0 88px;
    background-color: #fafafa;
    display: flex;
    flex-direction: column;
    font-family: "Roboto", sans-serif;
}

.avatar {
    width: 80px;
    height: 80px;
    border-radius: 50%;
    background-color: #f50057;
    margin: 0 auto;
    display: flex;
    align-items: center;
    justify-content: center;
}

.avatar svg {
    width: 46px;
    height: 46px;
    fill: #fff;
}

h1 {
    margin: 18px 0 37px;
    font-size: 47px;
    line-height: 60px;
    font-weight: 400;
    text-align: center;
    color: #222;
}

.field {
    height: 121px;
    margin: 0 0 22px;
    padding: 0 25px;
    border: 2px solid #c8c8c8;
    border-radius: 6px;
}

.field legend {
    margin-left: -9px;
    padding: 0 9px;
    font-size: 24px;
    line-height: 24px;
    color: #888;
}

.field input {
    width: 100%;
    height: 84px;
    border: none;
    padding: 0;
    background: transparent;
    font-family: "Roboto", sans-serif;
    font-size: 33px;
    color: #222;
}

.submit {
    height: 71px;
    margin-top: 25px;
    border: none;
    border-radius: 6px;
    background-color: #3f51b5;
    color: #fff;
    font-family: "Roboto", sans-serif;
    font-size: 28.5px;
    font-weight: 400;
    letter-spacing: .8px;
    box-shadow: 0 3px 5px rgba(0, 0, 0, .3);
}

.signin {
    margin-top: 33px;
    text-align: right;
    font-size: 28px;
}

.signin a {
    color: #66489a;
}

/* Title block */
.title-block {
    position: absolute;
    right: 0;
    bottom: 0;
    width: 871px;
    height: 261px;
    border-top: 4px solid var(--blue);
    border-left: 4px solid var(--blue);
    display: grid;
    grid-template-columns: 303px 564px;
    background-color: #fff;
}

.tb-left {
    display: grid;
    grid-template-columns: 28px 47px 109px 72px 47px;
    grid-template-rows: repeat(11, 23.36px);
}

.c {
    border-right: 4px solid var(--blue);
    border-bottom: 1px solid #000;
    display: flex;
    align-items: center;
    justify-content: center;
    min-width: 0;
}

.c-mid {
    border-bottom-width: 2px;
    border-bottom-color: #000;
}

.c-thick {
    border-bottom: 4px solid var(--blue);
}

.c-wide {
    grid-column: span 2;
}

.c-name {
    justify-content: flex-start;
}

.c-name .gost {
    transform-origin: left center;
    margin-left: 2px;
}

.c-last {
    border-bottom: none;
}

.tb-right {
    display: grid;
    grid-template-rows: 70px 117px 70px;
    min-width: 0;
}

.tb-number {
    display: flex;
    align-items: center;
    justify-content: center;
    border-bottom: 4px solid var(--blue);
}

.tb-mid {
    display: grid;
    grid-template-columns: 332px 232px;
    border-bottom: 4px solid var(--blue);
}

.tb-name {
    display: flex;
    flex-direction: column;
    align-items: center;
    justify-content: center;
    border-right: 4px solid var(--blue);
}

.tb-info {
    display: grid;
    grid-template-rows: 24px 69px 20px;
    min-width: 0;
}

.info-head,
.info-body {
    display: grid;
    grid-template-columns: 71px 80px 81px;
    border-bottom: 4px solid var(--blue);
}

.info-lit,
.info-mass {
    border-right: 4px solid var(--blue);
}

.info-head > div,
.info-body > div {
    display: flex;
    align-items: center;
    justify-content: center;
    min-width: 0;
}

.info-body .lit-cells {
    display: grid;
    grid-template-columns: 23px 24px 20px;
}

.lit-cells i {
    border-right: 1px solid #000;
}

.lit-cells i:last-child {
    border-right: none;
}

.info-foot {
    display: grid;
    grid-template-columns: 96px 136px;
}

.foot-sheet,
.foot-sheets {
    display: flex;
    align-items: center;
    padding-left: 2px;
    min-width: 0;
}

.foot-sheet {
    border-right: 4px solid var(--blue);
}

.foot-sheets {
    justify-content: space-between;
    padding-right: 22px;
}

.tb-bottom {
    display: grid;
    grid-template-columns: 332px 232px;
}

.tb-blank {
    border-right: 4px solid var(--blue);
}

.tb-org {
    display: flex;
    align-items: center;
    justify-content: center;
    min-width: 0;
}

.frame-foot {
    display: flex;
    height: 21px;
    align-items: center;
    padding-left: 2164px;
}

.foot-format {
    margin-left: 225px;
}

.foot-size {
    margin-left: 16px;
}
```
